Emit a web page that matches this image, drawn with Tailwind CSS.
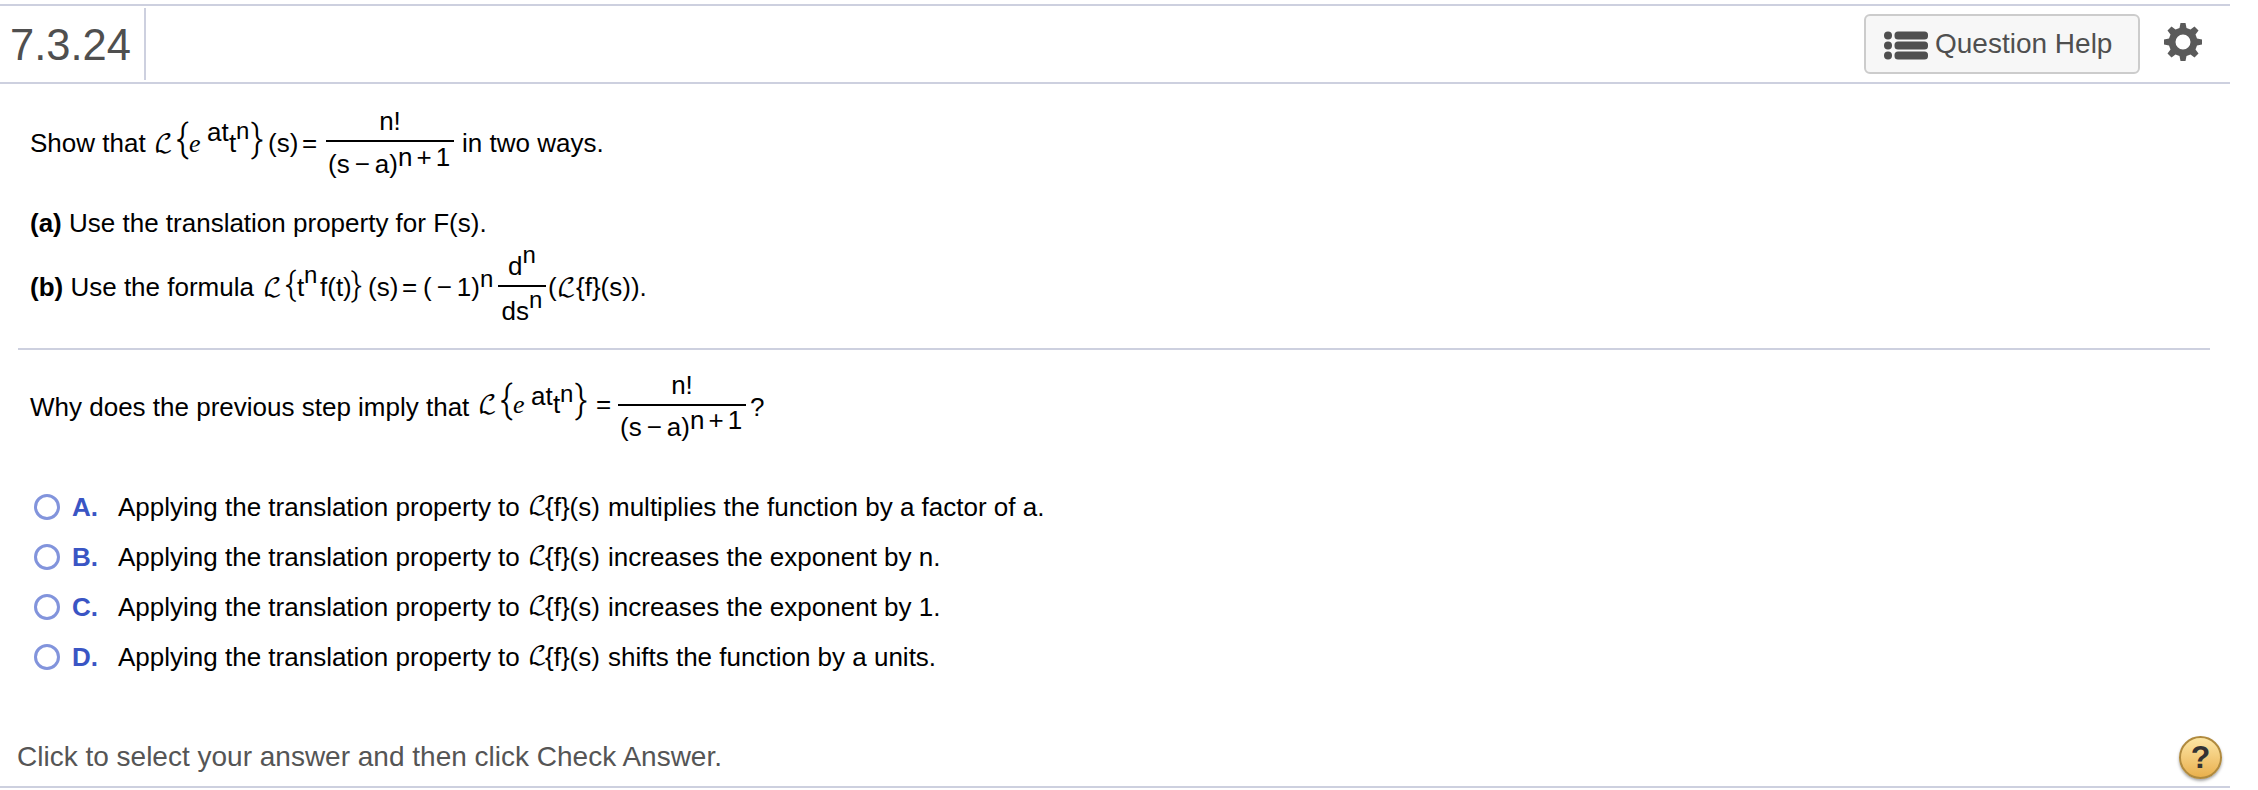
<!DOCTYPE html>
<html lang="en">

<head>
  <meta charset="UTF-8" />
  <title>7.3.24 - Question</title>
  <meta name="viewport" content="width=device-width, initial-scale=1.0" />

  <script src="https://cdn.jsdelivr.net/npm/@tailwindcss/browser@4"></script>
</head>

<body class="bg-white text-black h-[790px] w-[2258px] overflow-hidden font-['Liberation_Sans',Arial,sans-serif]">

  <div class="w-[2230px] h-[788px] mt-0 pt-1 flex flex-col">

    <!-- Header -->
    <header class="h-20 shrink-0 border-y-2 border-[#cdd0df] flex items-center justify-between text-[#4f4f4f]">
      <h1 class="w-[146px] h-[72px] border-r-2 border-[#cdd0df] pl-[10px] text-[43.5px] leading-[74px]">7.3.24</h1>
      <div class="flex items-center pr-[27px]">
        <button class="w-[276px] h-[60px] flex items-center border-2 border-[#cccccc] rounded-md bg-[#f7f7f7] pl-[18px]">
          <svg class="w-[44px] h-[30px] mt-1" viewBox="0 0 44 30" fill="#4f4f4f">
            <circle cx="4" cy="4.5" r="4" /><rect x="10.5" y="0.5" width="33.5" height="8" rx="3.5" />
            <circle cx="4" cy="14.5" r="4" /><rect x="10.5" y="10.5" width="33.5" height="8" rx="3.5" />
            <circle cx="4" cy="24.5" r="4" /><rect x="10.5" y="20.5" width="33.5" height="8" rx="3.5" />
          </svg>
          <span class="ml-[7px] text-[28px] leading-[58px] whitespace-nowrap">Question Help</span>
        </button>
        <svg class="w-[40px] h-[40px] ml-[23px] mb-1" viewBox="-20 -20 40 40" fill="#5a5a5a">
          <path fill-rule="evenodd" d="M-2.5-19H2.5L3.500-14L7.500-12.500L11.500-15.500L15.500-11.500L12.500-7.500L14-3.500L19-2.500V2.500L14 3.500L12.500 7.500L15.500 11.500L11.500 15.500L7.500 12.500L3.500 14L2.500 19H-2.500L-3.500 14L-7.500 12.500L-11.500 15.500L-15.500 11.500L-12.500 7.500L-14 3.500L-19 2.500V-2.500L-14-3.500L-12.500-7.500L-15.500-11.500L-11.500-15.500L-7.500-12.500L-3.500-14ZM0-7.500A7.500 7.500 0 1 0 0 7.500A7.500 7.500 0 1 0 0-7.500Z" />
        </svg>
      </div>
    </header>

    <!-- Problem statement -->
    <main class="flex-1 text-[26px] leading-none whitespace-nowrap">
      <div class="h-[102px] mt-6 pl-[30px] flex items-baseline">
        <span class="w-[124px]">Show that</span>
        <span class="w-[22px] font-['DejaVu_Math_TeX_Gyre',serif] text-[25px] leading-none">ℒ</span>
        <span class="w-[13px]"><span class="font-['Roboto',sans-serif] font-light text-[38px] leading-[0]">{</span></span>
        <span class="w-[18px] font-['Liberation_Serif',serif] italic">e</span>
        <span class="w-[22px]"><span class="align-[11px]">at</span></span>
        <span class="w-[7px]">t</span>
        <span class="w-[15px]"><span class="align-[13px] text-[24px] leading-none">n</span></span>
        <span class="w-[17px]"><span class="font-['Roboto',sans-serif] font-light text-[38px] leading-[0]">}</span></span>
        <span class="w-[34px]">(s)</span>
        <span class="w-[24px]">=</span>
        <span class="w-[136px]"><span class="inline-flex w-[128px] flex-col items-center align-[22px]">
          <span>n!</span>
          <span class="mt-[6px] h-[2px] w-full bg-black"></span>
          <span class="mt-[2px] w-[124px]">(s<span class="mx-[5px]">−</span>a)<span class="align-[7px]">n<span class="mx-1">+</span>1</span></span>
        </span></span>
        <span>in two ways.</span>
      </div>

      <div class="h-[33px] pl-[30px]"><b>(a)</b> Use the translation property for F(s).</div>

      <div class="h-[105px] pl-[30px] flex items-baseline">
        <span class="w-[233px]"><b>(b)</b> Use the formula</span>
        <span class="w-[22px] font-['DejaVu_Math_TeX_Gyre',serif] text-[25px] leading-none">ℒ</span>
        <span class="w-[12px]"><span class="font-['Roboto',sans-serif] font-light text-[34px] leading-[0]">{</span></span>
        <span class="w-[7px]">t</span>
        <span class="w-[16px]"><span class="align-[13px] text-[24px] leading-none">n</span></span>
        <span class="w-[31px]">f(t)</span>
        <span class="w-[17px]"><span class="font-['Roboto',sans-serif] font-light text-[34px] leading-[0]">}</span></span>
        <span class="w-[34px]">(s)</span>
        <span class="w-[21px]">=</span>
        <span class="w-[57px]">(<span class="mx-[5px]">−</span>1)</span>
        <span class="w-[18px]"><span class="align-[9px] text-[24px] leading-none">n</span></span>
        <span class="w-[50px]"><span class="inline-flex w-[48px] flex-col items-center align-[21px]">
          <span>d<span class="align-[12px] text-[24px] leading-none">n</span></span>
          <span class="mt-[6px] h-[2px] w-full bg-black"></span>
          <span class="mt-[1px]">ds<span class="align-[12px] text-[24px] leading-none">n</span></span>
        </span></span>
        <span class="w-[9px]">(</span>
        <span class="w-[19px] font-['DejaVu_Math_TeX_Gyre',serif] text-[25px] leading-none">ℒ</span>
        <span>{f}(s)).</span>
      </div>

      <!-- Question -->
      <div class="ml-[18px] w-[2192px] h-[2px] bg-[#cdd0df]"></div>

      <div class="h-[122px] mt-[22px] pl-[30px] flex items-baseline">
        <span class="w-[448px]">Why does the previous step imply that</span>
        <span class="w-[22px]"><span class="font-['DejaVu_Math_TeX_Gyre',serif] text-[25px] leading-none align-[3px]">ℒ</span></span>
        <span class="w-[13px]"><span class="font-['Roboto',sans-serif] font-light text-[38px] leading-[0] align-[3px]">{</span></span>
        <span class="w-[18px]"><span class="font-['Liberation_Serif',serif] italic align-[3px]">e</span></span>
        <span class="w-[22px]"><span class="align-[11px]">at</span></span>
        <span class="w-[7px]"><span class="align-[3px]">t</span></span>
        <span class="w-[15px]"><span class="align-[14px] text-[24px] leading-none">n</span></span>
        <span class="w-[21px]"><span class="font-['Roboto',sans-serif] font-light text-[38px] leading-[0] align-[3px]">}</span></span>
        <span class="w-[22px]"><span class="align-[3px]">=</span></span>
        <span class="w-[132px]"><span class="inline-flex w-[128px] flex-col items-center align-[22px]">
          <span>n!</span>
          <span class="mt-[6px] h-[2px] w-full bg-black"></span>
          <span class="mt-[1px] w-[124px]">(s<span class="mx-[5px]">−</span>a)<span class="align-[7px]">n<span class="mx-1">+</span>1</span></span>
        </span></span>
        <span>?</span>
      </div>

      <!-- Answer choices -->
      <ul>
        <li class="h-[50px] pl-[34px] flex items-start">
          <span class="mr-3 block size-[26px] rounded-full border-[3px] border-[#8294dc] bg-white"></span>
          <b class="w-[46px] text-[#3a55c4]">A.</b>
          <span class="w-[410px]">Applying the translation property to</span>
          <span class="w-[17px] font-['DejaVu_Math_TeX_Gyre',serif] text-[25px] leading-none">ℒ</span>
          <span class="w-[63px]">{f}(s)</span>
          <span>multiplies the function by a factor of a.</span>
        </li>
        <li class="h-[50px] pl-[34px] flex items-start">
          <span class="mr-3 block size-[26px] rounded-full border-[3px] border-[#8294dc] bg-white"></span>
          <b class="w-[46px] text-[#3a55c4]">B.</b>
          <span class="w-[410px]">Applying the translation property to</span>
          <span class="w-[17px] font-['DejaVu_Math_TeX_Gyre',serif] text-[25px] leading-none">ℒ</span>
          <span class="w-[63px]">{f}(s)</span>
          <span>increases the exponent by n.</span>
        </li>
        <li class="h-[50px] pl-[34px] flex items-start">
          <span class="mr-3 block size-[26px] rounded-full border-[3px] border-[#8294dc] bg-white"></span>
          <b class="w-[46px] text-[#3a55c4]">C.</b>
          <span class="w-[410px]">Applying the translation property to</span>
          <span class="w-[17px] font-['DejaVu_Math_TeX_Gyre',serif] text-[25px] leading-none">ℒ</span>
          <span class="w-[63px]">{f}(s)</span>
          <span>increases the exponent by 1.</span>
        </li>
        <li class="h-[50px] pl-[34px] flex items-start">
          <span class="mr-3 block size-[26px] rounded-full border-[3px] border-[#8294dc] bg-white"></span>
          <b class="w-[46px] text-[#3a55c4]">D.</b>
          <span class="w-[410px]">Applying the translation property to</span>
          <span class="w-[17px] font-['DejaVu_Math_TeX_Gyre',serif] text-[25px] leading-none">ℒ</span>
          <span class="w-[63px]">{f}(s)</span>
          <span>shifts the function by a units.</span>
        </li>
      </ul>
    </main>

    <!-- Footer -->
    <footer class="h-[60px] shrink-0 border-b-2 border-[#cdd0df] pl-[17px] pr-2 flex items-center justify-between text-[#555555]">
      <p class="text-[28px] leading-[58px]">Click to select your answer and then click Check Answer.</p>
      <button class="size-[43px] rounded-full border-2 border-[#b08a3e] bg-linear-to-b from-[#fce6a4] to-[#e9b04c] shadow-[0_2px_3px_rgba(0,0,0,0.35)] text-[32px] leading-[39px] font-bold text-[#333333]">?</button>
    </footer>

  </div>

</body>
</html>
